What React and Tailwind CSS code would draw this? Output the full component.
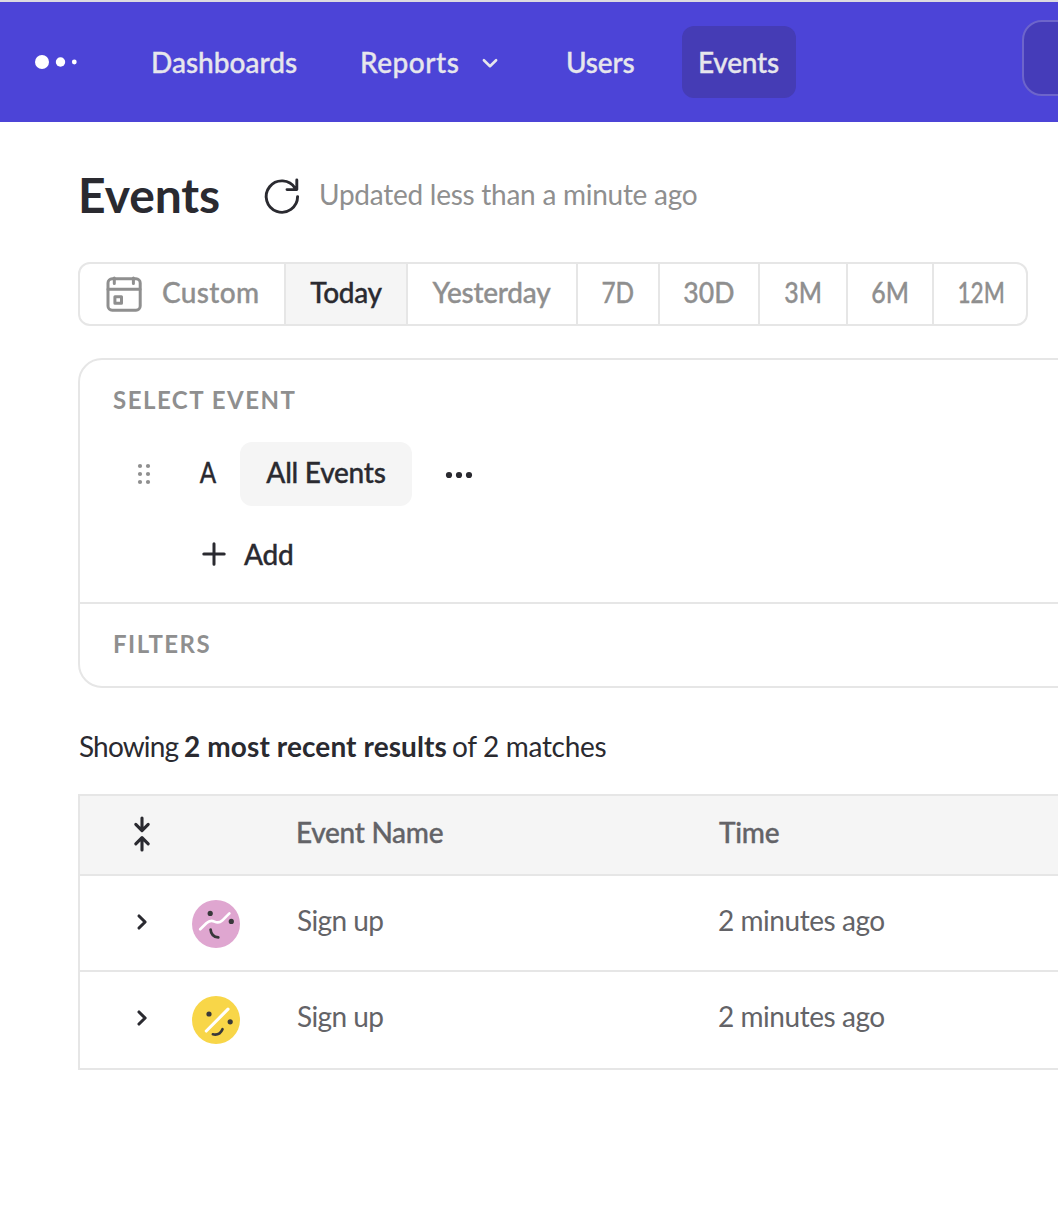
import React from 'react';

const ranges = [
  { label: 'Yesterday', cell: 'w-[170px]', text: '-ml-px tracking-[-0.25px]' },
  { label: '7D', cell: 'w-[82px]', text: 'scale-x-[0.87]' },
  { label: '30D', cell: 'w-[100px]', text: 'scale-x-[0.95]' },
  { label: '3M', cell: 'w-[88px]', text: 'scale-x-[0.89]' },
  { label: '6M', cell: 'w-[86px]', text: 'scale-x-[0.89]' },
  { label: '12M', cell: 'w-[92px]', text: 'scale-x-[0.81] pl-[2px]' },
];

function Logo() {
  return (
    <svg className="shrink-0" width="44" height="16" viewBox="0 0 44 16" fill="#fff">
      <circle cx="8" cy="8" r="7" />
      <circle cx="26.5" cy="8" r="4.7" />
      <circle cx="40.3" cy="8" r="2.4" />
    </svg>
  );
}

function ChevronDown() {
  return (
    <svg width="20" height="20" viewBox="0 0 20 20" fill="none" stroke="#e6e6ec" strokeWidth="2.6" strokeLinecap="round" strokeLinejoin="round">
      <path d="M3.9 8.2 10 14.2l6.1-6" />
    </svg>
  );
}

function Refresh() {
  return (
    <svg width="40" height="40" viewBox="0 0 40 40" fill="none" stroke="#2a2a30" strokeWidth="2.9" strokeLinecap="round" strokeLinejoin="round">
      <path d="M35.6 20.6A15.7 15.7 0 1 1 33.2 12.2M34.8 4v9.6H25" />
    </svg>
  );
}

function CalendarIcon() {
  return (
    <svg width="36" height="36" viewBox="0 0 36 36" fill="none" stroke="#8f8f8f" strokeWidth="3" strokeLinecap="round">
      <rect x="2" y="2.8" width="32.2" height="31.4" rx="4.2" />
      <path d="M2 13.300h32M8.300 2v5.600M27.400 2v5.600" />
      <rect x="8.900" y="20.700" width="6.600" height="6.600" strokeLinejoin="round" />
    </svg>
  );
}

function Grip() {
  return (
    <svg width="16" height="24" viewBox="0 0 16 24" fill="#8f8f8f">
      {[4, 12, 20].map((y) => (
        <g key={y}>
          <circle cx="4" cy={y} r="2.1" />
          <circle cx="12" cy={y} r="2.1" />
        </g>
      ))}
    </svg>
  );
}

function More() {
  return (
    <svg width="30" height="10" viewBox="0 0 30 10" fill="#2a2a30">
      <circle cx="5" cy="5" r="3.1" />
      <circle cx="15" cy="5" r="3.1" />
      <circle cx="25" cy="5" r="3.1" />
    </svg>
  );
}

function Plus() {
  return (
    <svg width="26" height="26" viewBox="0 0 26 26" fill="none" stroke="#2a2a30" strokeWidth="3" strokeLinecap="round">
      <path d="M13 2.800v20.400M2.800 13h20.400" />
    </svg>
  );
}

function Collapse() {
  return (
    <svg width="20" height="38" viewBox="0 0 20 38" fill="none" stroke="#2a2a30" strokeWidth="3.1" strokeLinecap="round" strokeLinejoin="round">
      <path d="M10 3v12M3.8 9.400 10 15.600l6.200-6.200M10 35V23M3.800 28.800 10 22.600l6.200 6.200" />
    </svg>
  );
}

function ChevronRight() {
  return (
    <svg width="20" height="20" viewBox="0 0 20 20" fill="none" stroke="#2a2a30" strokeWidth="3.1" strokeLinecap="round" strokeLinejoin="round">
      <path d="M7 4l6.100 6L7 16" />
    </svg>
  );
}

function PinkFace() {
  return (
    <svg width="48" height="48" viewBox="0 0 48 48" fill="none" strokeLinecap="round" strokeLinejoin="round">
      <circle cx="24" cy="24" r="24" fill="#dfa6d0" />
      <path d="M8.200 29.200 14.600 23q3.800-3.400 7.800-1.400 4.400 2.200 7.800-1L37.400 13.400" stroke="#fff" strokeWidth="2.700" />
      <circle cx="18.200" cy="13.400" r="2.600" fill="#38383a" />
      <circle cx="39.300" cy="21.400" r="2.600" fill="#38383a" />
      <path d="M18.600 29.600c.3 4.300 3.200 7.300 7.700 7.800" stroke="#38383a" strokeWidth="2.700" />
    </svg>
  );
}

function YellowFace() {
  return (
    <svg width="48" height="48" viewBox="0 0 48 48" fill="none" strokeLinecap="round" strokeLinejoin="round">
      <circle cx="24" cy="24" r="24" fill="#f8d648" />
      <path d="M14.300 35 36 13.200" stroke="#fff" strokeWidth="3.100" />
      <circle cx="17" cy="18" r="2.600" fill="#38383a" />
      <circle cx="38.200" cy="25.800" r="2.600" fill="#38383a" />
      <path d="M20.900 38.300c4.200.9 7.800-1 9.600-5.100" stroke="#38383a" strokeWidth="2.700" />
    </svg>
  );
}

function EventRow({ face, height }) {
  return (
    <div className={`grid grid-cols-[52px_60px_104px_422px_1fr] border-b-2 border-[#e6e6e6] pt-6 ${height}`}>
      <span />
      <span className="flex h-11 items-center"><ChevronRight /></span>
      {face}
      <span className="flex h-[39px] items-center pl-px tracking-[-0.6px] text-[#636367]">Sign up</span>
      <span className="flex h-[39px] items-center tracking-[-0.45px] text-[#636367]">2 minutes ago</span>
    </div>
  );
}

export default function App() {
  return (
    <div className="h-[1224px] w-[1058px] overflow-hidden bg-white font-['Lato',sans-serif] text-[28px] leading-[34px] whitespace-nowrap text-[#2a2a30]">
      <header className="flex h-[122px] items-center border-t-2 border-[#dcdbe0] bg-[#4c44d7] pl-[34px] font-medium text-[#e6e6ec] [-webkit-text-stroke:0.35px]">
        <Logo />
        <nav className="flex shrink-0 items-center">
          <a className="ml-[73px] w-[209px]">Dashboards</a>
          <a className="flex w-[206px] items-center">
            <span className="w-[120px] tracking-[0.5px]">Reports</span>
            <ChevronDown />
          </a>
          <a className="w-[116px] tracking-[-0.17px]">Users</a>
          <a className="flex h-[72px] w-[114px] items-center rounded-xl bg-[#453cb5] pl-4 tracking-[-0.22px]">Events</a>
        </nav>
        <div className="-mt-2 ml-[226px] h-[76px] w-[200px] shrink-0 rounded-[20px] border-2 border-[#6d65cb] bg-[#453cb9]" />
      </header>

      <main className="pt-[42px] pl-[78px]">
        <div className="flex h-[60px] items-center">
          <h1 className="w-[184px] pt-[2px] text-[48px] leading-[58px] font-bold tracking-[-0.1px]">Events</h1>
          <span className="w-[57px] pt-1"><Refresh /></span>
          <span className="tracking-[-0.26px] text-[#8f8f8f]">Updated less than a minute ago</span>
        </div>

        <div className="mt-[38px] flex h-16 w-[950px] overflow-hidden rounded-xl border-2 border-[#e6e6e6] font-medium text-[#8f8f8f] [-webkit-text-stroke:0.35px]">
          <div className="flex w-[206px] items-center border-r-2 border-[#e6e6e6] pl-[26px]">
            <CalendarIcon />
            <span className="ml-5 pb-[5px] tracking-[0.35px]">Custom</span>
          </div>
          <div className="flex w-[122px] items-center justify-center border-r-2 border-[#e6e6e6] bg-[#f5f5f5] pb-[5px] tracking-[-0.3px] text-[#2a2a30]">Today</div>
          {ranges.map((r) => (
            <div key={r.label} className={`flex items-center justify-center border-r-2 border-[#e6e6e6] pb-[5px] last:border-r-0 ${r.cell}`}>
              <span className={r.text}>{r.label}</span>
            </div>
          ))}
        </div>

        <section className="mt-8 h-[330px] w-[1200px] rounded-3xl border-2 border-[#e6e6e6] font-medium">
          <div className="h-[244px] border-b-2 border-[#e6e6e6] pt-[23px]">
            <h2 className="pl-[33px] text-[24px] font-bold tracking-[1.5px] text-[#8f8f8f]">SELECT EVENT</h2>
            <div className="mt-[25px] flex h-16 items-center pl-[56px] [-webkit-text-stroke:0.35px]">
              <Grip />
              <span className="ml-[46px] w-[42px] origin-left scale-x-[0.86] pb-[5px] pl-[2px]">A</span>
              <span className="flex h-16 w-[172px] items-center justify-center rounded-xl bg-[#f5f5f5] pb-[5px] tracking-[-0.25px]">All Events</span>
              <span className="ml-8 pt-[2px]"><More /></span>
            </div>
            <div className="mt-[31px] flex items-center pl-[121px] [-webkit-text-stroke:0.35px]">
              <Plus />
              <span className="ml-[17px] tracking-[-0.25px]">Add</span>
            </div>
          </div>
          <h2 className="pt-[23px] pl-[33px] text-[24px] font-bold tracking-[1.47px] text-[#8f8f8f]">FILTERS</h2>
        </section>

        <p className="mt-[41px] mb-[31px] flex h-[34px] pl-px">
          <span className="w-[105px] tracking-[-0.85px]">Showing</span>
          <strong className="w-[268px] font-bold tracking-[0.1px]">2 most recent results</strong>
          <span className="tracking-[-0.32px]">of 2 matches</span>
        </p>

        <div className="w-[1200px] border-2 border-b-0 border-[#e6e6e6]">
          <div className="grid h-20 grid-cols-[52px_164px_422px_1fr] border-b-2 border-[#e6e6e6] bg-[#f5f5f5] font-medium text-[#636367] [-webkit-text-stroke:0.35px]">
            <span />
            <span className="flex h-[76px] items-center"><Collapse /></span>
            <span className="flex h-[71px] items-center tracking-[-0.3px]">Event Name</span>
            <span className="flex h-[71px] items-center pl-px tracking-[-0.25px]">Time</span>
          </div>
          <EventRow face={<PinkFace />} height="h-24" />
          <EventRow face={<YellowFace />} height="h-[98px]" />
        </div>
      </main>
    </div>
  );
}
